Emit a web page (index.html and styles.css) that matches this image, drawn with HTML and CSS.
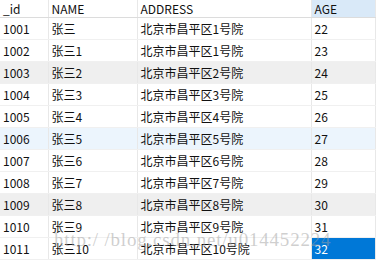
FILE: index.html
```html
<!DOCTYPE html>
<html>
<head>
<meta charset="utf-8">
<link rel="stylesheet" href="styles.css">
</head>
<body>
<div class="wrap">
<table class="grid">
<colgroup><col class="c-id"><col class="c-name"><col class="c-addr"><col class="c-age"></colgroup>
<thead>
<tr><th>_id</th><th>NAME</th><th>ADDRESS</th><th class="sorted">AGE</th></tr>
</thead>
<tbody>
<tr><td>1001</td><td>张三</td><td>北京市昌平区1号院</td><td>22</td></tr>
<tr><td>1002</td><td>张三1</td><td>北京市昌平区1号院</td><td>23</td></tr>
<tr class="gray"><td>1003</td><td>张三2</td><td>北京市昌平区2号院</td><td>24</td></tr>
<tr><td>1004</td><td>张三3</td><td>北京市昌平区3号院</td><td>25</td></tr>
<tr><td>1005</td><td>张三4</td><td>北京市昌平区4号院</td><td>26</td></tr>
<tr class="hover"><td>1006</td><td>张三5</td><td>北京市昌平区5号院</td><td>27</td></tr>
<tr><td>1007</td><td>张三6</td><td>北京市昌平区6号院</td><td>28</td></tr>
<tr><td>1008</td><td>张三7</td><td>北京市昌平区7号院</td><td>29</td></tr>
<tr class="gray"><td>1009</td><td>张三8</td><td>北京市昌平区8号院</td><td>30</td></tr>
<tr><td>1010</td><td>张三9</td><td>北京市昌平区9号院</td><td>31</td></tr>
<tr><td>1011</td><td>张三10</td><td>北京市昌平区10号院</td><td class="selected">32</td></tr>
</tbody>
</table>
<div class="watermark">http:/ /blog.csdn.net/u014452224</div>
</div>
</body>
</html>
```
FILE: styles.css
```css
html, body {
  margin: 0;
  padding: 0;
  background: #ffffff;
}
.wrap {
  position: relative;
  width: 378px;
  height: 263px;
  overflow: hidden;
}
.grid {
  border-collapse: collapse;
  table-layout: fixed;
  width: 375px;
  font-family: "Noto Sans CJK SC", "Noto Sans", sans-serif;
  font-size: 12px;
  color: #111;
}
.c-id { width: 48px; }
.c-name { width: 89px; }
.c-addr { width: 174px; }
.c-age { width: 64px; }
th, td {
  padding: 0 0 0 3px;
  text-align: left;
  font-weight: normal;
  white-space: nowrap;
  overflow: hidden;
  border-right: 1px solid #e8e8e8;
}
th {
  height: 17px;
  line-height: 17px;
  border-bottom: 1px solid #dcdcdc;
  vertical-align: middle;
}
th.sorted {
  background: #d9e9f8;
}
td {
  height: 21px;
  line-height: 21px;
  border-bottom: 1px solid #f0f0f0;
}
tr.gray td { background: #efefef; }
tr.hover td { background: #ecf5fd; }
td.selected {
  background: #0078d7 !important;
  color: #ffffff;
}
.watermark {
  position: absolute;
  left: 54px;
  top: 229px;
  font-family: "Liberation Serif", serif;
  font-size: 19px;
  letter-spacing: 0.8px;
  color: rgba(160, 160, 160, 0.5);
  white-space: nowrap;
  pointer-events: none;
}
```
